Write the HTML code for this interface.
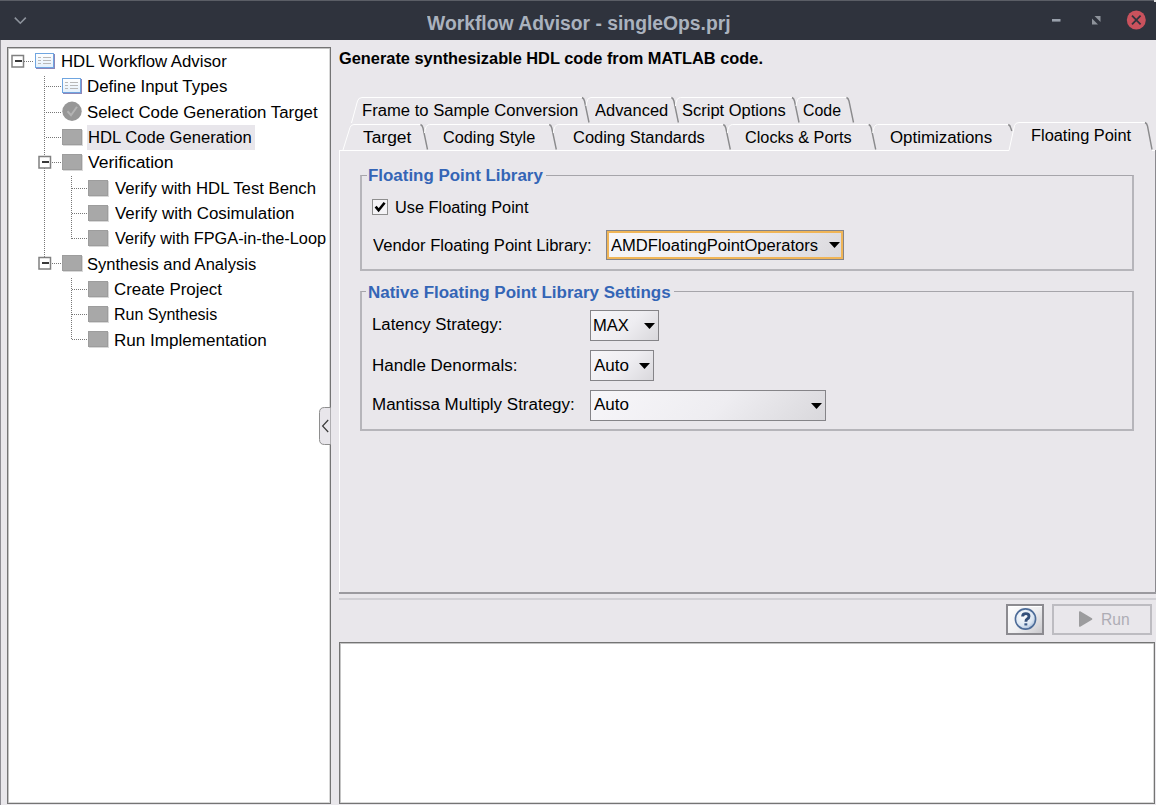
<!DOCTYPE html>
<html><head><meta charset="utf-8"><title>Workflow Advisor</title><style>
*{margin:0;padding:0;box-sizing:content-box}
html,body{width:1156px;height:805px;overflow:hidden;background:#e9e7eb}
body{position:relative;font-family:"Liberation Sans",sans-serif;color:#000}
.abs{position:absolute}
.t{position:absolute;font-size:16px;line-height:16px;white-space:pre;transform-origin:0 0}
#title{position:absolute;left:0;top:0;width:1156px;height:40px;background:#2f333d}
.combo{position:absolute;border:1px solid #858488;background:linear-gradient(135deg,#f7f6f9 0%,#eeedf1 55%,#d9d8dc 100%)}
.combo .focus{position:absolute;left:0;top:0;right:0;bottom:0;border:2px solid #f0b557}
.btn{border:2px solid #8c8b90;box-shadow:inset 0 1px 0 #ffffff;background:linear-gradient(135deg,#fdfdfe 0%,#eeeef0 55%,#c9c8cc 100%)}
</style></head><body>
<div id="title"></div>
<svg class="abs" style="left:0;top:0" width="1156" height="40"><rect x="0" y="0" width="1156" height="1" fill="#5b5e66"/><polyline points="14.8,17.6 20.3,23.2 25.8,17.6" fill="none" stroke="#8d939c" stroke-width="1.6"/><rect x="1052" y="19" width="8.5" height="2.6" fill="#99a0ab"/><polygon points="1094.5,16 1100.5,16 1100.5,22" fill="#8e939b"/><polygon points="1092,18.5 1092,24.5 1098,24.5" fill="#8e939b"/><circle cx="1136.3" cy="20" r="9.5" fill="#c9525d"/><path d="M1132,15.7 L1140.6,24.3 M1140.6,15.7 L1132,24.3" stroke="#2f333d" stroke-width="1.8"/><rect x="1154" y="0" width="2" height="2" fill="#e0e0e0"/></svg>
<div class="t" style="left:426.80px;top:12.6px;transform:scaleX(0.9655);font-weight:bold;font-size:20px;line-height:20px;color:#aab2be">Workflow Advisor - singleOps.prj</div>
<div class="abs" style="left:0;top:40px;width:1px;height:765px;background:#8f8e94"></div>
<div class="abs" style="left:7px;top:47px;width:322px;height:755px;border:1px solid #747474;box-shadow:inset 1px 1px 0 #c4c4c4, inset -1px -1px 0 #d8d8d8;background:#fff"></div>
<div class="abs" style="left:87px;top:125px;width:168px;height:25px;background:#e8e6eb"></div>
<svg class="abs" style="left:0;top:0" width="340" height="360"><defs><pattern id="dv" width="1" height="2" patternUnits="userSpaceOnUse"><rect width="1" height="1" fill="#777777"/></pattern><pattern id="dh" width="2" height="1" patternUnits="userSpaceOnUse"><rect width="1" height="1" fill="#777777"/></pattern><linearGradient id="docg" x1="0" y1="0" x2="0" y2="1"><stop offset="0" stop-color="#ffffff"/><stop offset="1" stop-color="#e4f0fb"/></linearGradient></defs><rect x="12.0" y="55.5" width="11.5" height="11.5" fill="#fff" stroke="#808080" stroke-width="1.5"/><rect x="15.0" y="60" width="7" height="2" fill="#3a3a3a"/><rect x="24" y="61" width="10" height="1" fill="url(#dh)"/><rect x="44" y="75" width="1" height="188" fill="url(#dv)"/><rect x="45" y="86" width="16" height="1" fill="url(#dh)"/><rect x="45" y="112" width="16" height="1" fill="url(#dh)"/><rect x="45" y="137" width="16" height="1" fill="url(#dh)"/><rect x="45" y="162" width="16" height="1" fill="url(#dh)"/><rect x="72" y="188" width="16" height="1" fill="url(#dh)"/><rect x="72" y="213" width="16" height="1" fill="url(#dh)"/><rect x="72" y="238" width="16" height="1" fill="url(#dh)"/><rect x="45" y="263" width="16" height="1" fill="url(#dh)"/><rect x="72" y="289" width="16" height="1" fill="url(#dh)"/><rect x="72" y="314" width="16" height="1" fill="url(#dh)"/><rect x="72" y="339" width="16" height="1" fill="url(#dh)"/><rect x="71" y="176" width="1" height="63" fill="url(#dv)"/><rect x="71" y="277" width="1" height="63" fill="url(#dv)"/><rect x="39.0" y="156.5" width="11.5" height="11.5" fill="#fff" stroke="#808080" stroke-width="1.5"/><rect x="42.0" y="161" width="7" height="2" fill="#3a3a3a"/><rect x="39.0" y="257.5" width="11.5" height="11.5" fill="#fff" stroke="#808080" stroke-width="1.5"/><rect x="42.0" y="262" width="7" height="2" fill="#3a3a3a"/><rect x="36" y="54" width="19" height="15" fill="#8d86b8"/><rect x="35.5" y="53.5" width="18" height="14" fill="url(#docg)" stroke="#6fa5e0"/><rect x="38" y="57" width="3" height="1" fill="#b8b8b8"/><rect x="43" y="57" width="8" height="1" fill="#b8b8b8"/><rect x="38" y="60" width="3" height="1" fill="#b8b8b8"/><rect x="43" y="60" width="8" height="1" fill="#b8b8b8"/><rect x="38" y="63" width="3" height="1" fill="#b8b8b8"/><rect x="43" y="63" width="8" height="1" fill="#b8b8b8"/><rect x="63" y="79" width="19" height="15" fill="#8d86b8"/><rect x="62.5" y="78.5" width="18" height="14" fill="url(#docg)" stroke="#6fa5e0"/><rect x="65" y="82" width="3" height="1" fill="#b8b8b8"/><rect x="70" y="82" width="8" height="1" fill="#b8b8b8"/><rect x="65" y="85" width="3" height="1" fill="#b8b8b8"/><rect x="70" y="85" width="8" height="1" fill="#b8b8b8"/><rect x="65" y="88" width="3" height="1" fill="#b8b8b8"/><rect x="70" y="88" width="8" height="1" fill="#b8b8b8"/><circle cx="72" cy="111.24000000000001" r="9.7" fill="#979797"/><polyline points="67.5,111.24000000000001 71,115.24000000000001 77,106.74000000000001" fill="none" stroke="#b4b4b4" stroke-width="2"/><rect x="63" y="130" width="20" height="16" fill="#d8d8d8"/><rect x="62" y="129" width="20" height="16" fill="#9d9d9d"/><rect x="63" y="130" width="18" height="14" fill="#a8a8a8"/><rect x="63" y="155" width="20" height="16" fill="#d8d8d8"/><rect x="62" y="154" width="20" height="16" fill="#9d9d9d"/><rect x="63" y="155" width="18" height="14" fill="#a8a8a8"/><rect x="89" y="181" width="20" height="16" fill="#d8d8d8"/><rect x="88" y="180" width="20" height="16" fill="#9d9d9d"/><rect x="89" y="181" width="18" height="14" fill="#a8a8a8"/><rect x="89" y="206" width="20" height="16" fill="#d8d8d8"/><rect x="88" y="205" width="20" height="16" fill="#9d9d9d"/><rect x="89" y="206" width="18" height="14" fill="#a8a8a8"/><rect x="89" y="231" width="20" height="16" fill="#d8d8d8"/><rect x="88" y="230" width="20" height="16" fill="#9d9d9d"/><rect x="89" y="231" width="18" height="14" fill="#a8a8a8"/><rect x="63" y="256" width="20" height="16" fill="#d8d8d8"/><rect x="62" y="255" width="20" height="16" fill="#9d9d9d"/><rect x="63" y="256" width="18" height="14" fill="#a8a8a8"/><rect x="89" y="282" width="20" height="16" fill="#d8d8d8"/><rect x="88" y="281" width="20" height="16" fill="#9d9d9d"/><rect x="89" y="282" width="18" height="14" fill="#a8a8a8"/><rect x="89" y="307" width="20" height="16" fill="#d8d8d8"/><rect x="88" y="306" width="20" height="16" fill="#9d9d9d"/><rect x="89" y="307" width="18" height="14" fill="#a8a8a8"/><rect x="89" y="332" width="20" height="16" fill="#d8d8d8"/><rect x="88" y="331" width="20" height="16" fill="#9d9d9d"/><rect x="89" y="332" width="18" height="14" fill="#a8a8a8"/></svg>
<div class="t" style="left:60.95px;top:54.0px;transform:scaleX(1.0471)">HDL Workflow Advisor</div>
<div class="t" style="left:86.95px;top:79.0px;transform:scaleX(1.0545)">Define Input Types</div>
<div class="t" style="left:86.95px;top:104.5px;transform:scaleX(1.0509)">Select Code Generation Target</div>
<div class="t" style="left:87.96px;top:130.0px;transform:scaleX(1.0378)">HDL Code Generation</div>
<div class="t" style="left:87.60px;top:155.0px;transform:scaleX(1.0935)">Verification</div>
<div class="t" style="left:114.80px;top:180.5px;transform:scaleX(1.0466)">Verify with HDL Test Bench</div>
<div class="t" style="left:114.80px;top:206.0px;transform:scaleX(1.0568)">Verify with Cosimulation</div>
<div class="t" style="left:114.80px;top:231.0px;transform:scaleX(1.0184)">Verify with FPGA-in-the-Loop</div>
<div class="t" style="left:86.97px;top:256.5px;transform:scaleX(1.0340)">Synthesis and Analysis</div>
<div class="t" style="left:113.94px;top:282.0px;transform:scaleX(1.0554)">Create Project</div>
<div class="t" style="left:114.00px;top:307.0px;transform:scaleX(1.0000)">Run Synthesis</div>
<div class="t" style="left:113.93px;top:332.5px;transform:scaleX(1.0674)">Run Implementation</div>
<svg class="abs" style="left:315px;top:400px" width="20" height="50"><path d="M15.5,7.5 H9.5 Q4.5,7.5 4.5,12.5 V39.5 Q4.5,44.5 9.5,44.5 H15.5" fill="#e8e6eb" stroke="#8e8e8e" stroke-width="1"/><polyline points="13.2,20 7.6,26 13.2,32" fill="none" stroke="#3a3a3a" stroke-width="1.2"/></svg>
<div class="t" style="left:338.98px;top:51.0px;transform:scaleX(1.0225);font-weight:bold;color:#000">Generate synthesizable HDL code from MATLAB code.</div>
<svg class="abs" style="left:0;top:0" width="1156" height="160"><path d="M351.5,123 L357.5,101 Q358.5,97.5 362,97.5 L582,97.5" fill="none" stroke="#ffffff" stroke-width="1"/><path d="M582,97.5 Q584,98.5 584.5,101 L589,122.5" fill="none" stroke="#8a8a8c" stroke-width="1.4"/><path d="M586,106 Q587,97.5 591,97.5 L671.4,97.5" fill="none" stroke="#ffffff" stroke-width="1"/><path d="M671.4,97.5 Q673.4,98.5 673.9,101 L678.4,122.5" fill="none" stroke="#8a8a8c" stroke-width="1.4"/><path d="M675.4,106 Q676.4,97.5 680.4,97.5 L792,97.5" fill="none" stroke="#ffffff" stroke-width="1"/><path d="M792,97.5 Q794,98.5 794.5,101 L799,122.5" fill="none" stroke="#8a8a8c" stroke-width="1.4"/><path d="M796,106 Q797,97.5 801,97.5 L846.5,97.5" fill="none" stroke="#ffffff" stroke-width="1"/><path d="M846.5,97.5 Q848.5,98.5 849.0,101 L853.5,122.5" fill="none" stroke="#8a8a8c" stroke-width="1.4"/><path d="M343,150 L350,127.5 Q351,124.5 354,124.5 L420.5,124.5" fill="none" stroke="#ffffff" stroke-width="1"/><path d="M420.5,124.5 Q422.5,125.5 423.0,128 L427.5,149.5" fill="none" stroke="#8a8a8c" stroke-width="1.4"/><path d="M424.5,133 Q425.5,124.5 429.5,124.5 L549.3,124.5" fill="none" stroke="#ffffff" stroke-width="1"/><path d="M549.3,124.5 Q551.3,125.5 551.8,128 L556.3,149.5" fill="none" stroke="#8a8a8c" stroke-width="1.4"/><path d="M553.3,133 Q554.3,124.5 558.3,124.5 L723.3,124.5" fill="none" stroke="#ffffff" stroke-width="1"/><path d="M723.3,124.5 Q725.3,125.5 725.8,128 L730.3,149.5" fill="none" stroke="#8a8a8c" stroke-width="1.4"/><path d="M727.3,133 Q728.3,124.5 732.3,124.5 L868.7,124.5" fill="none" stroke="#ffffff" stroke-width="1"/><path d="M868.7,124.5 Q870.7,125.5 871.2,128 L875.7,149.5" fill="none" stroke="#8a8a8c" stroke-width="1.4"/><path d="M872.7,133 Q873.7,124.5 877.7,124.5 L1008.3,124.5" fill="none" stroke="#ffffff" stroke-width="1"/><path d="M1008.3,124.5 Q1010.3,125.5 1010.8,128 L1011.8,131" fill="none" stroke="#8a8a8c" stroke-width="1.4"/><path d="M1009,150.5 L1014.5,125.5 Q1015.5,122.5 1019,122.5 L1145,122.5" fill="none" stroke="#ffffff" stroke-width="1"/><path d="M1145,122.5 Q1147,123.5 1147.5,126 L1152,149.5" fill="none" stroke="#8a8a8c" stroke-width="1.4"/><rect x="339" y="150" width="670" height="1" fill="#ffffff"/><rect x="1152" y="150" width="3" height="1" fill="#ffffff"/></svg>
<div class="t" style="left:362.36px;top:103.0px;transform:scaleX(1.0393)">Frame to Sample Conversion</div>
<div class="t" style="left:594.50px;top:103.0px;transform:scaleX(1.0286)">Advanced</div>
<div class="t" style="left:682.47px;top:103.0px;transform:scaleX(1.0313)">Script Options</div>
<div class="t" style="left:802.61px;top:103.0px;transform:scaleX(0.9946)">Code</div>
<div class="t" style="left:363.00px;top:130.0px;transform:scaleX(1.0864)">Target</div>
<div class="t" style="left:442.68px;top:130.0px;transform:scaleX(1.0169)">Coding Style</div>
<div class="t" style="left:573.37px;top:130.0px;transform:scaleX(1.0291)">Coding Standards</div>
<div class="t" style="left:744.78px;top:130.0px;transform:scaleX(1.0154)">Clocks &amp; Ports</div>
<div class="t" style="left:890.45px;top:130.0px;transform:scaleX(1.0542)">Optimizations</div>
<div class="t" style="left:1030.68px;top:128.0px;transform:scaleX(1.0237)">Floating Point</div>
<div class="abs" style="left:339px;top:150px;width:1px;height:443px;background:#fff"></div>
<div class="abs" style="left:1155px;top:150px;width:1px;height:444px;background:#8a898e"></div>
<div class="abs" style="left:339px;top:592px;width:817px;height:2px;background:#9b9a9f"></div>
<div class="abs" style="left:339px;top:598px;width:817px;height:2px;background:#d0cfd4"></div>
<div class="abs" style="left:360px;top:175px;width:770px;height:93px;border:2px solid #b6b5ba;border-top:1px solid #a6a5aa"></div><div class="abs" style="left:366.5px;top:173px;width:179.39999999999998px;height:5px;background:#e9e7eb"></div><div class="t" style="left:368.44px;top:168.0px;transform:scaleX(1.0573);font-weight:bold;color:#3465b6">Floating Point Library</div>
<div class="abs" style="left:360px;top:291px;width:770px;height:137px;border:2px solid #b6b5ba;border-top:1px solid #a6a5aa"></div><div class="abs" style="left:366.4px;top:289px;width:307.20000000000005px;height:5px;background:#e9e7eb"></div><div class="t" style="left:368.34px;top:285.0px;transform:scaleX(1.0606);font-weight:bold;color:#3465b6">Native Floating Point Library Settings</div>
<svg class="abs" style="left:370px;top:197px" width="22" height="22"><rect x="2.5" y="2.5" width="15" height="15" fill="#f4f3f6" stroke="#8e8e8e"/><polyline points="5.6,9.6 8.6,13.2 14.6,5.8" fill="none" stroke="#000" stroke-width="2.6"/></svg>
<div class="t" style="left:394.58px;top:200.0px;transform:scaleX(1.0208)">Use Floating Point</div>
<div class="t" style="left:372.50px;top:238.0px;transform:scaleX(1.0368)">Vendor Floating Point Library:</div>
<div class="combo" style="left:606px;top:230px;width:236px;height:28px"><div class="focus"></div></div><svg class="abs" style="left:827.5px;top:241.0px" width="14" height="9"><polygon points="1,1 12,1 6.5,7" fill="#000"/></svg>
<div class="t" style="left:610.60px;top:238.0px;transform:scaleX(1.0350)">AMDFloatingPointOperators</div>
<div class="t" style="left:371.95px;top:317.0px;transform:scaleX(1.0475)">Latency Strategy:</div>
<div class="combo" style="left:590px;top:310px;width:67px;height:29px"></div><svg class="abs" style="left:642.5px;top:321.5px" width="14" height="9"><polygon points="1,1 12,1 6.5,7" fill="#000"/></svg>
<div class="t" style="left:593.16px;top:318.0px;transform:scaleX(1.0364)">MAX</div>
<div class="t" style="left:371.94px;top:358.0px;transform:scaleX(1.0615)">Handle Denormals:</div>
<div class="combo" style="left:590px;top:350px;width:62px;height:29px"></div><svg class="abs" style="left:637.5px;top:361.5px" width="14" height="9"><polygon points="1,1 12,1 6.5,7" fill="#000"/></svg>
<div class="t" style="left:593.80px;top:358.0px;transform:scaleX(1.0625)">Auto</div>
<div class="t" style="left:371.94px;top:397.0px;transform:scaleX(1.0603)">Mantissa Multiply Strategy:</div>
<div class="combo" style="left:590px;top:390px;width:234px;height:29px"></div><svg class="abs" style="left:809.5px;top:401.5px" width="14" height="9"><polygon points="1,1 12,1 6.5,7" fill="#000"/></svg>
<div class="t" style="left:594.00px;top:397.0px;transform:scaleX(1.0625)">Auto</div>
<div class="abs btn" style="left:1006px;top:604px;width:34px;height:27px"></div>
<svg class="abs" style="left:1010px;top:603px" width="32" height="32"><defs><radialGradient id="hg" cx="0.4" cy="0.35" r="0.7"><stop offset="0" stop-color="#ffffff"/><stop offset="0.7" stop-color="#dbe6f2"/><stop offset="1" stop-color="#9fb6d3"/></radialGradient></defs><circle cx="15.5" cy="16" r="10.1" fill="url(#hg)" stroke="#4d6c98" stroke-width="1.6"/><path d="M12.6,13.6 Q12.6,10.6 15.8,10.6 Q19,10.6 19,13.2 Q19,15 17.2,16 Q15.9,16.7 15.9,18.8" fill="none" stroke="#34507a" stroke-width="2.9"/><rect x="14.4" y="20.3" width="2.9" height="2.2" fill="#3a5a88"/></svg>
<div class="abs" style="left:1052px;top:604px;width:96px;height:27px;border:2px solid #bdbcc1"></div>
<svg class="abs" style="left:1076px;top:608px" width="20" height="22"><polygon points="3.8,4 15.5,11 3.8,18" fill="#9c9c9e" stroke="#9c9c9e" stroke-width="1.6" stroke-linejoin="round"/></svg>
<div class="t" style="left:1101.33px;top:612.0px;transform:scaleX(0.9750);color:#aeadb5">Run</div>
<div class="abs" style="left:339px;top:642px;width:814px;height:160px;border:1px solid #747474;box-shadow:inset 1px 1px 0 #c4c4c4, inset -1px -1px 0 #d8d8d8;background:#fff"></div>
</body></html>
